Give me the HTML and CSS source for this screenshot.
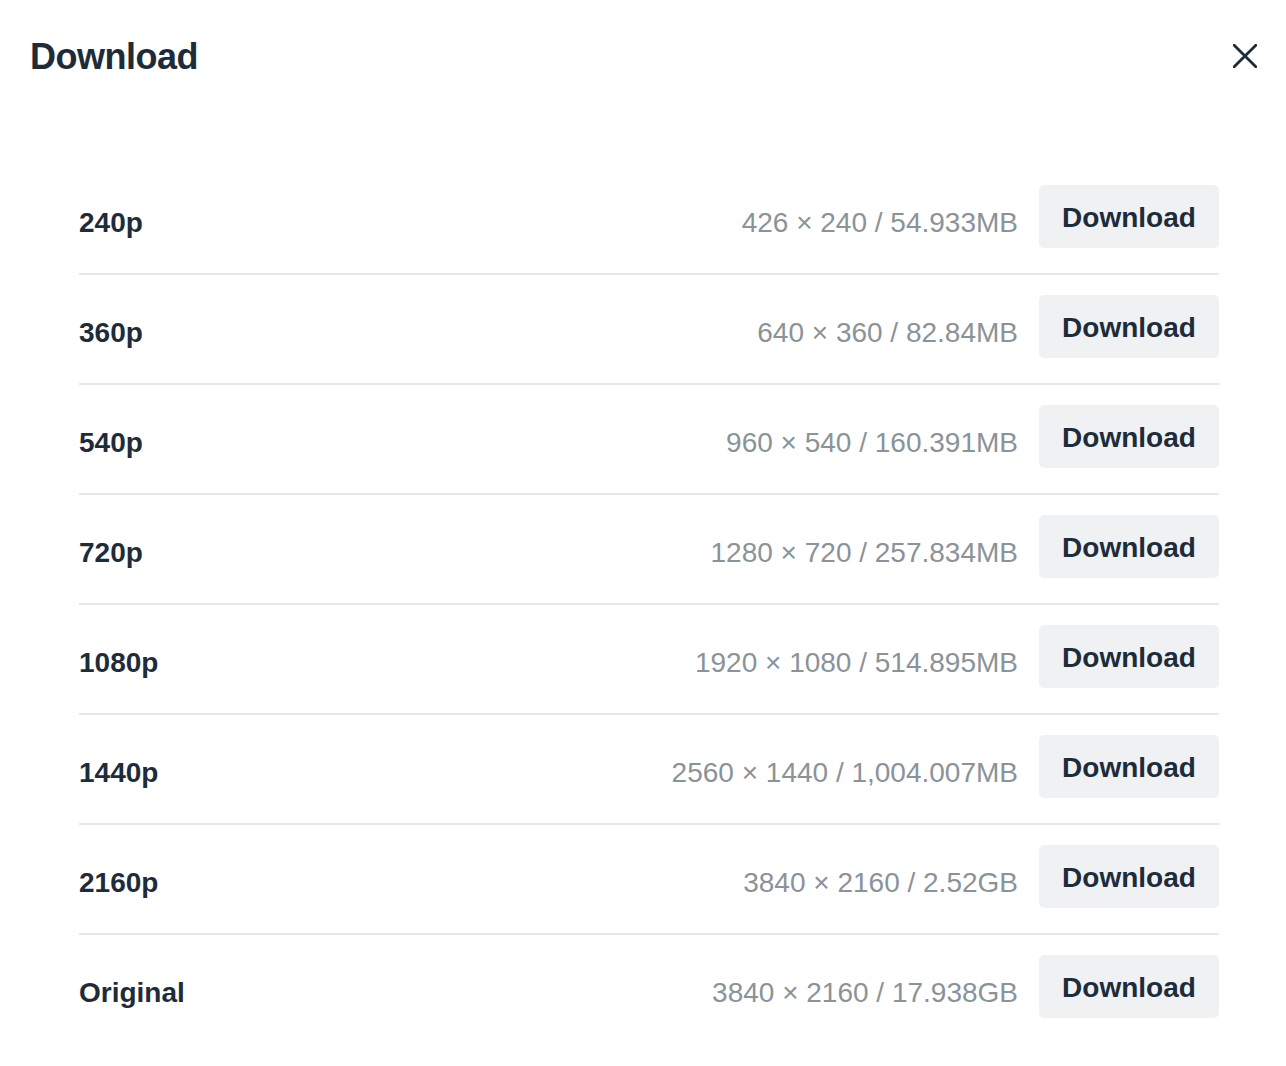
FILE: index.html
```html
<!DOCTYPE html>
<html lang="en">
<head>
<meta charset="utf-8">
<title>Download</title>
<link rel="stylesheet" href="styles.css">
</head>
<body>
<div class="dialog">
  <header class="header">
    <h1 class="title">Download</h1>
    <button class="close" aria-label="Close">
      <svg width="24" height="24" viewBox="0 0 24 24"><path d="M1.2 1.2 L22.8 22.8 M22.8 1.2 L1.2 22.8" stroke="#1e2c3a" stroke-width="2.8" stroke-linecap="round" fill="none"/></svg>
    </button>
  </header>
  <ul class="list">
    <li class="row"><span class="label">240p</span><span class="spec">426 × 240 / 54.933MB</span><button class="btn">Download</button></li>
    <li class="row"><span class="label">360p</span><span class="spec">640 × 360 / 82.84MB</span><button class="btn">Download</button></li>
    <li class="row"><span class="label">540p</span><span class="spec">960 × 540 / 160.391MB</span><button class="btn">Download</button></li>
    <li class="row"><span class="label">720p</span><span class="spec">1280 × 720 / 257.834MB</span><button class="btn">Download</button></li>
    <li class="row"><span class="label">1080p</span><span class="spec">1920 × 1080 / 514.895MB</span><button class="btn">Download</button></li>
    <li class="row"><span class="label">1440p</span><span class="spec">2560 × 1440 / 1,004.007MB</span><button class="btn">Download</button></li>
    <li class="row"><span class="label">2160p</span><span class="spec">3840 × 2160 / 2.52GB</span><button class="btn">Download</button></li>
    <li class="row"><span class="label">Original</span><span class="spec">3840 × 2160 / 17.938GB</span><button class="btn">Download</button></li>
  </ul>
</div>
</body>
</html>
```
FILE: styles.css
```css
* { box-sizing: border-box; }
html, body {
  margin: 0;
  padding: 0;
  background: #ffffff;
  font-family: "Liberation Sans", Arial, sans-serif;
  color: #1e2c3a;
}
.dialog {
  width: 1286px;
  height: 1066px;
}
.header {
  display: flex;
  justify-content: space-between;
  align-items: flex-start;
  height: 165px;
  padding: 39px 29px 0 30px;
}
.title {
  margin: 0;
  font-size: 36px;
  line-height: 36px;
  font-weight: 700;
  letter-spacing: -0.5px;
  color: #1e2c3a;
}
.close {
  margin: 5px 0 0 0;
  padding: 0;
  border: 0;
  background: none;
  width: 24px;
  height: 24px;
  display: block;
  cursor: pointer;
}
.close svg { display: block; }
.list {
  list-style: none;
  margin: 0 67px 0 79px;
  padding: 0;
}
.row {
  display: flex;
  align-items: center;
  height: 110px;
  border-bottom: 2px solid #e5e8ea;
}
.row:last-child { border-bottom-color: transparent; }
.label {
  flex: 1;
  font-size: 28px;
  font-weight: 700;
  line-height: 32px;
  padding-top: 8px;
  color: #1e2c3a;
}
.spec {
  font-size: 28px;
  line-height: 32px;
  padding-top: 8px;
  color: #8a9398;
  margin-right: 21px;
}
.btn {
  width: 180px;
  height: 63px;
  margin-bottom: 5px;
  padding: 2px 0 0 0;
  border: 0;
  border-radius: 5px;
  background: #eff1f3;
  font-family: "Liberation Sans", Arial, sans-serif;
  font-size: 28px;
  font-weight: 700;
  line-height: 61px;
  color: #1e2c3a;
  cursor: pointer;
}
```
